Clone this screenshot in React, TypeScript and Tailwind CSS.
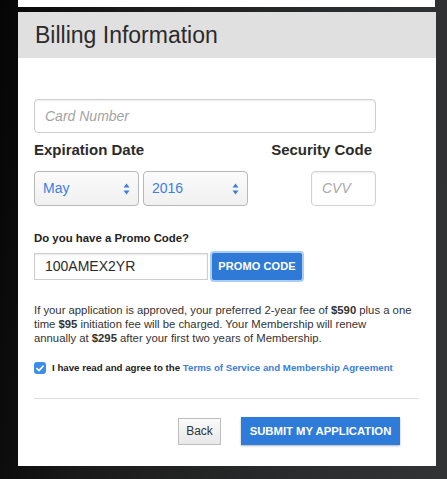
import React from "react"

const font = { fontFamily: '"Liberation Sans", Arial, Helvetica, sans-serif' }

function SelectArrows() {
  return (
    <svg width="7" height="12" viewBox="0 0 7 12" className="shrink-0">
      <path d="M3.5 0.5 L6.5 4.5 L0.5 4.5 Z" fill="#3b7fe0" />
      <path d="M3.5 11.5 L6.5 7.5 L0.5 7.5 Z" fill="#3b7fe0" />
    </svg>
  )
}

function FakeSelect({ value }: { value: string }) {
  return (
    <div className="w-[105px] h-[35px] flex items-center justify-between pl-[8px] pr-[8px] rounded-[4px] border border-[#b8b8b8] bg-[linear-gradient(#fbfbfb,#f0f0f0)] text-[14px] text-[#3b7fe0]">
      <span>{value}</span>
      <SelectArrows />
    </div>
  )
}

export default function App() {
  return (
    <div
      style={font}
      className="w-[447px] h-[479px] overflow-hidden bg-[linear-gradient(95deg,#050505_0%,#1a1a1a_25%,#2b2c2d_70%,#323334_100%)]"
    >
      {/* previous panel edge */}
      <div className="ml-[18px] w-[417px] h-[7px] bg-white" />

      <div className="ml-[18px] mt-[5px] w-[418px] bg-white">
        {/* Header */}
        <div className="h-[46px] bg-[#e0e0e0] flex items-center pl-[17px]">
          <h1 className="text-[23px] text-[#2b2b2b] leading-none">Billing Information</h1>
        </div>

        {/* Body */}
        <div className="pl-4 pr-[17px] pt-[41px] pb-[21px]">
          <div className="w-[342px] h-[34px] rounded-[4px] border border-[#cfcfcf] shadow-[inset_0_1px_2px_rgba(0,0,0,0.08)] flex items-center pl-[10px]">
            <span className="italic text-[14px] text-[#a3a3a3]">Card Number</span>
          </div>

          <div className="w-[342px] mt-2 flex justify-between text-[15px] leading-[18px] font-bold text-[#2b2b2b]">
            <span>Expiration Date</span>
            <span className="mr-[4px]">Security Code</span>
          </div>

          <div className="w-[342px] mt-3 flex items-center">
            <FakeSelect value="May" />
            <div className="ml-[4px]">
              <FakeSelect value="2016" />
            </div>
            <div className="ml-auto w-[65px] h-[35px] rounded-[4px] border border-[#d2d2d2] shadow-[inset_0_1px_2px_rgba(0,0,0,0.08)] flex items-center pl-[10px]">
              <span className="italic text-[14px] text-[#a9a9a9]">CVV</span>
            </div>
          </div>

          <p className="mt-[25px] text-[11.4px] leading-[14px] font-bold text-[#222]">Do you have a Promo Code?</p>

          <div className="mt-2 flex items-center">
            <div className="w-[174px] h-[27px] border border-[#cfcfcf] shadow-[inset_0_1px_2px_rgba(0,0,0,0.1)] flex items-center pl-[10px] text-[14px] text-[#2b2b2b]">
              100AMEX2YR
            </div>
            <button className="ml-[4px] w-[90px] h-[27px] bg-[#2f7ad6] text-white text-[11px] font-bold rounded-[2px] shadow-[0_0_0_2px_#a9cdf5] tracking-[0.1px]">
              PROMO CODE
            </button>
          </div>

          <p className="mt-[23px] w-[382px] text-[11.3px] leading-[14px] text-[#333]">
            If your application is approved, your preferred 2-year fee of <b>$590</b> plus a one
            time <b>$95</b> initiation fee will be charged. Your Membership will renew<br />
            annually at <b>$295</b> after your first two years of Membership.
          </p>

          <div className="mt-[16px] flex items-center h-[14px]">
            <div className="w-[12px] h-[12px] rounded-[3px] bg-[#3d8ee8] flex items-center justify-center">
              <svg width="8" height="7" viewBox="0 0 8 7">
                <path d="M1 3.6 L3 5.6 L7 1.2" stroke="white" strokeWidth="1.6" fill="none" strokeLinecap="round" strokeLinejoin="round" />
              </svg>
            </div>
            <span className="ml-[6px] text-[9.7px] font-bold text-[#222] whitespace-nowrap">
              I have read and agree to the{" "}
              <a className="text-[#3d80d8]">Terms of Service and Membership Agreement</a>
            </span>
          </div>

          <div className="mt-[23px] h-px bg-[#dcdcdc]" />

          <div className="mt-[18px] flex justify-end items-center pr-[19px] gap-[20px]">
            <button className="w-[43px] h-[27px] border border-[#bdbdbd] bg-[linear-gradient(#fafafa,#e8e8e8)] text-[12px] text-[#333]">
              Back
            </button>
            <button className="w-[159px] h-[28px] bg-[#2f7bd9] text-white text-[11.3px] font-bold shadow-[0_1px_2px_rgba(0,0,0,0.3)]">
              SUBMIT MY APPLICATION
            </button>
          </div>
        </div>
      </div>
    </div>
  )
}
